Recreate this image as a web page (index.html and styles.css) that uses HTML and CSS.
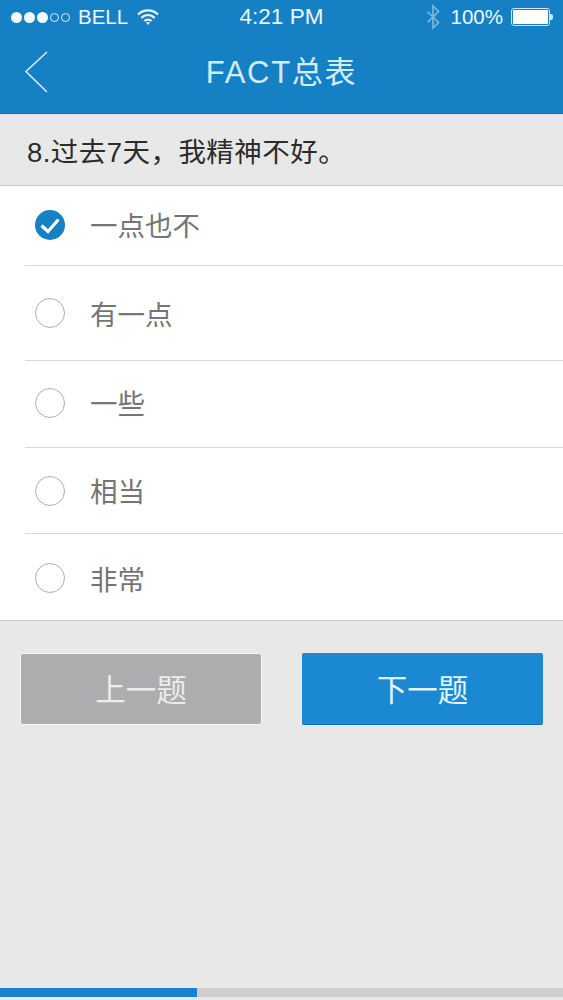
FILE: index.html
```html
<!DOCTYPE html>
<html lang="zh">
<head>
<meta charset="utf-8">
<title>FACT总表</title>
<link rel="stylesheet" href="styles.css">
</head>
<body>
<div class="page">
  <header class="header">
    <div class="status">
      <div class="status-left">
        <span class="dots"><i class="dot on"></i><i class="dot on"></i><i class="dot on"></i><i class="dot"></i><i class="dot"></i></span>
        <span class="carrier">BELL</span>
        <svg class="wifi" width="22" height="18" viewBox="0 0 22 18"><path d="M1 6.500C6.500 1 15.500 1 21 6.500M4.200 10C8 6 14 6 17.800 10M7.300 13C9.300 11.200 12.700 11.200 14.700 13" fill="none" stroke="#e6f3fb" stroke-width="2.200"/><path d="M9 14.500 11 17l2-2.500c-1.200-.8-2.800-.8-4 0z" fill="#e6f3fb"/></svg>
      </div>
      <div class="clock">4:21 PM</div>
      <div class="status-right">
        <svg class="bt" width="14" height="26" viewBox="0 0 14 26"><path d="M1.500 7.500l11 11L7 24V2l5.500 5.500-11 11" fill="none" stroke="#7fb8de" stroke-width="1.600"/></svg>
        <span class="pct">100%</span>
        <span class="battery"><span class="battery-fill"></span></span>
      </div>
    </div>
    <div class="nav">
      <svg class="back" width="24" height="42" viewBox="0 0 24 42"><path d="M23 1 2 20.500 23 41" fill="none" stroke="#d4ebf8" stroke-width="1.600"/></svg>
      <div class="title">FACT总表</div>
    </div>
  </header>

  <div class="question">8.过去7天，我精神不好。</div>

  <ul class="options">
    <li class="option first">
      <svg class="check" width="30" height="30" viewBox="0 0 30 30"><circle cx="15" cy="15" r="15" fill="#1580c4"/><path d="M6.500 15.500 13 21.500 23.500 9.500" fill="none" stroke="#fff" stroke-width="3.200"/></svg>
      <span class="label">一点也不</span>
    </li>
    <li class="option second"><span class="radio"></span><span class="label">有一点</span></li>
    <li class="option third"><span class="radio"></span><span class="label">一些</span></li>
    <li class="option fourth"><span class="radio"></span><span class="label">相当</span></li>
    <li class="option last"><span class="radio"></span><span class="label">非常</span></li>
  </ul>

  <div class="actions">
    <div class="btn prev">上一题</div>
    <div class="btn next">下一题</div>
  </div>

  <div class="progress"><div class="progress-fill"></div></div>
</div>
</body>
</html>
```

FILE: styles.css
```css
* { box-sizing: border-box; }
html, body { margin: 0; padding: 0; }
body { font-family: "Liberation Sans", "Noto Sans CJK SC", sans-serif; background: #e8e8e9; }
.page { width: 563px; height: 1000px; display: flex; flex-direction: column; background: #e8e8e9; overflow: hidden; }

.header { height: 114px; background: #1580c4; border-bottom: 1px solid #1069a3; color: #eef7fc; flex: none; }
.status { height: 34px; padding: 0 8px 0 11px; display: flex; align-items: center; justify-content: space-between; position: relative; font-size: 20.500px; }
.status-left { display: flex; align-items: center; }
.dots { display: flex; align-items: center; gap: 2px; margin-right: 8px; }
.dot { width: 9px; height: 9px; border-radius: 50%; border: 1px solid #dff0fa; display: block; }
.dot.on { width: 11px; height: 11px; background: #f4fafd; border: none; }
.carrier { margin-right: 9px; }
.wifi { display: block; }
.clock { position: absolute; left: 0; right: 0; text-align: center; font-size: 22.500px; }
.status-right { display: flex; align-items: center; }
.bt { margin-right: 11px; display: block; }
.pct { margin-right: 8px; font-size: 20.500px; }
.battery { width: 39px; height: 18px; border: 1px solid #cfe6f5; border-radius: 3px; padding: 1px; position: relative; display: block; margin-right: 5px; }
.battery::after { content: ""; position: absolute; right: -4px; top: 5px; width: 3px; height: 6px; background: #cfe6f5; border-radius: 0 2px 2px 0; }
.battery-fill { display: block; height: 100%; background: #fff; border-radius: 1px; }

.nav { height: 79px; display: flex; align-items: center; justify-content: center; position: relative; }
.back { position: absolute; left: 24px; top: 17px; }
.title { font-size: 31px; font-weight: 400; color: #d4ebf8; letter-spacing: 1.700px; margin-top: -9px; }

.question { height: 72px; flex: none; display: flex; align-items: center; padding: 0 0 0 27px; font-size: 27.500px; letter-spacing: .45px; color: #2c2c2c; border-bottom: 1px solid #c9c9c9; }

.options { margin: 0; padding: 0; list-style: none; background: #fff; border-bottom: 1px solid #c9c9c9; flex: none; }
.option { display: flex; align-items: center; margin-left: 25px; padding-left: 10px; border-bottom: 1px solid #d6d6d6; }
.option.first { height: 80px; padding-bottom: 2px; }
.option.second { height: 95px; }
.option.third { height: 87px; padding-bottom: 3px; }
.option.fourth { height: 86px; }
.option.last { height: 86px; border-bottom: none; padding-top: 2px; }
.check { display: block; flex: none; margin-right: 25px; }
.radio { width: 30px; height: 30px; border-radius: 50%; border: 1px solid #aeaeae; background: #fff; flex: none; margin-right: 25px; }
.label { font-size: 27.500px; color: #757575; line-height: 1.4; padding-top: 6px; }

.actions { display: flex; justify-content: space-between; padding: 32px 20px 0; flex: none; }
.btn { width: 242px; height: 72px; display: flex; align-items: center; justify-content: center; font-size: 30.500px; border-radius: 2px; padding-bottom: 2px; }
.prev { background: #aeacae; color: #ececec; border: 1px solid #f6f6f6; border-radius: 3px; }
.next { width: 241px; background: #1a88d3; color: #e3f3fc; border-bottom: 1px solid #1470b0; }

.progress { margin-top: auto; margin-bottom: 3px; height: 9px; background: #cfcecc; flex: none; }
.progress-fill { width: 197px; height: 100%; background: #1a80cf; }
```
